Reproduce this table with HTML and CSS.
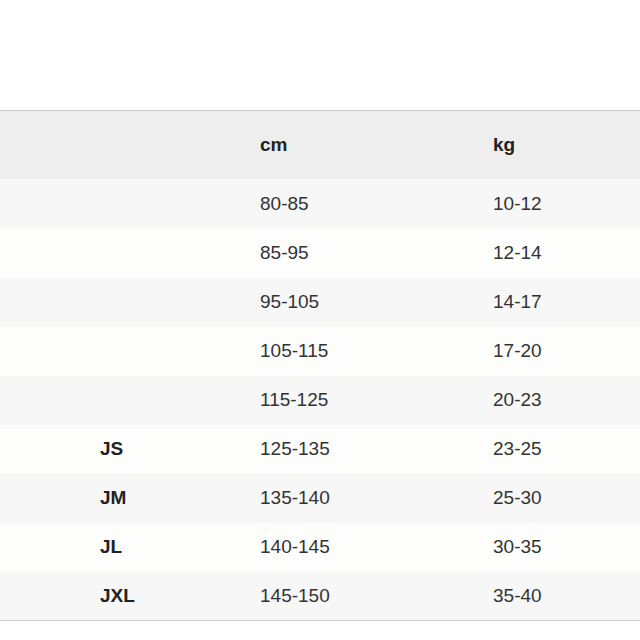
FILE: index.html
```html
<!DOCTYPE html>
<html>
<head>
<meta charset="utf-8">
<link rel="stylesheet" href="styles.css">
</head>
<body>
<table class="size-table">
  <colgroup>
    <col class="c0"><col class="c1"><col class="c2"><col class="c3">
  </colgroup>
  <thead>
    <tr><th></th><th></th><th>cm</th><th>kg</th></tr>
  </thead>
  <tbody>
    <tr class="first"><td></td><td></td><td>80-85</td><td>10-12</td></tr>
    <tr><td></td><td></td><td>85-95</td><td>12-14</td></tr>
    <tr><td></td><td></td><td>95-105</td><td>14-17</td></tr>
    <tr><td></td><td></td><td>105-115</td><td>17-20</td></tr>
    <tr><td></td><td></td><td>115-125</td><td>20-23</td></tr>
    <tr><td></td><td class="size">JS</td><td>125-135</td><td>23-25</td></tr>
    <tr><td></td><td class="size">JM</td><td>135-140</td><td>25-30</td></tr>
    <tr><td></td><td class="size">JL</td><td>140-145</td><td>30-35</td></tr>
    <tr><td></td><td class="size">JXL</td><td>145-150</td><td>35-40</td></tr>
  </tbody>
</table>
</body>
</html>
```

FILE: styles.css
```css
html, body {
  margin: 0;
  padding: 0;
  background: #ffffff;
}
body {
  font-family: "Liberation Sans", Arial, sans-serif;
  color: #333333;
}
.size-table {
  margin-top: 110px;
  width: 640px;
  border-collapse: collapse;
  table-layout: fixed;
  border-top: 1px solid #cccccc;
  border-bottom: 1px solid #cccccc;
  font-size: 19px;
}
.c0 { width: 90px; }
.c1 { width: 160px; }
.c2 { width: 233px; }
.c3 { width: 157px; }
.size-table th,
.size-table td {
  padding: 0 10px;
  text-align: left;
  vertical-align: middle;
  line-height: 20px;
}
.size-table thead tr {
  background: #eeeeee;
  height: 68px;
}
.size-table th {
  font-weight: bold;
  color: #222222;
}
.size-table tbody tr {
  height: 49px;
}
.size-table tbody tr.first {
  height: 50px;
}
.size-table tbody tr:nth-child(odd) {
  background: #f7f7f7;
}
.size-table tbody tr:nth-child(even) {
  background: #fdfdfc;
}
.size-table td.size {
  font-weight: bold;
  color: #222222;
}
```
